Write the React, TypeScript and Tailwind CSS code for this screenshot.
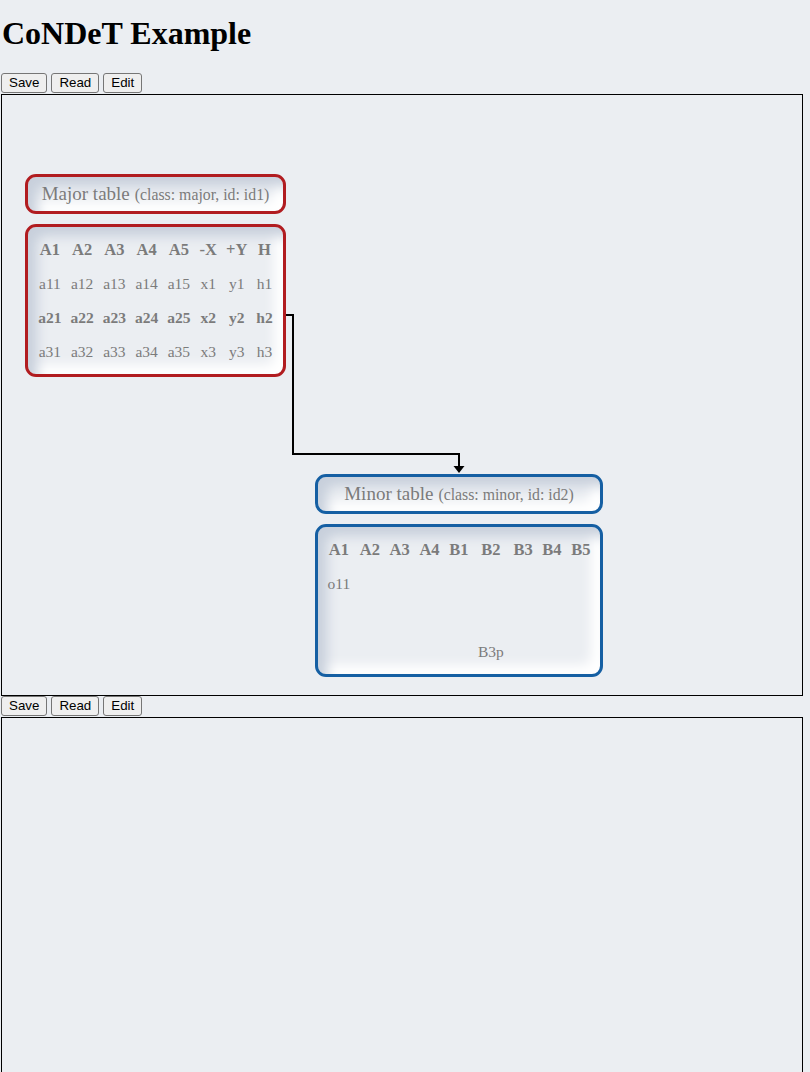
import React from "react";

const serif = "font-['Liberation_Serif','Times_New_Roman',serif]";
const inset =
  "bg-[#ebeef2] shadow-[inset_9px_9px_12px_#c8d0dc,inset_-9px_-9px_12px_#ffffff]";

type Node = {
  title: string;
  meta: string;
  color: string;
  pos: string;
  pad: string;
  headers: string[];
  rows: { cells: string[]; bold?: boolean }[];
};

const nodes: Node[] = [
  {
    title: "Major table",
    meta: "(class: major, id: id1)",
    color: "border-[#b11c20]",
    pos: "left-[23px] top-[79px] w-[261px]",
    pad: "px-[4.5px]",
    headers: ["A1", "A2", "A3", "A4", "A5", "-X", "+Y", "H"],
    rows: [
      { cells: ["a11", "a12", "a13", "a14", "a15", "x1", "y1", "h1"] },
      { cells: ["a21", "a22", "a23", "a24", "a25", "x2", "y2", "h2"], bold: true },
      { cells: ["a31", "a32", "a33", "a34", "a35", "x3", "y3", "h3"] },
    ],
  },
  {
    title: "Minor table",
    meta: "(class: minor, id: id2)",
    color: "border-[#155fa3]",
    pos: "left-[313px] top-[379px] w-[288px]",
    pad: "px-[4.8px]",
    headers: ["A1", "A2", "A3", "A4", "B1", "B2", "B3", "B4", "B5"],
    rows: [
      { cells: ["o11", "", "", "", "", "", "", "", ""] },
      { cells: ["", "", "", "", "", "", "", "", ""] },
      { cells: ["", "", "", "", "", "B3p", "", "", ""] },
    ],
  },
];

function Buttons() {
  return (
    <div className="flex gap-[4px] pl-px h-[21px] items-start">
      {["Save", "Read", "Edit"].map((b) => (
        <button
          key={b}
          className="h-[20px] px-[7px] border border-[#767676] rounded-[3px] bg-[#efefef] text-[13.33px] leading-none text-black font-['Liberation_Sans',Arial,sans-serif]"
        >
          {b}
        </button>
      ))}
    </div>
  );
}

function TableNode({ node }: { node: Node }) {
  return (
    <div className={`absolute ${node.pos} flex flex-col gap-[10px] ${serif} text-[#7b7b7b]`}>
      <div
        className={`h-[40px] border-[3px] ${node.color} rounded-[11px] ${inset} flex items-center justify-center gap-[5px]`}
      >
        <span className="text-[19px]">{node.title}</span>
        <span className="text-[15.8px] pt-[2px]">{node.meta}</span>
      </div>
      <div className={`h-[153px] border-[3px] ${node.color} rounded-[11px] ${inset} pt-[6px]`}>
        <table className="mx-auto border-collapse">
          <thead>
            <tr className="h-[34px]">
              {node.headers.map((h) => (
                <th key={h} className={`${node.pad} text-[16.5px] font-bold`}>
                  {h}
                </th>
              ))}
            </tr>
          </thead>
          <tbody>
            {node.rows.map((r, i) => (
              <tr key={i} className={`h-[34px] ${r.bold ? "font-bold" : ""}`}>
                {r.cells.map((c, j) => (
                  <td key={j} className={`${node.pad} text-[15.5px] text-center`}>
                    {c}
                  </td>
                ))}
              </tr>
            ))}
          </tbody>
        </table>
      </div>
    </div>
  );
}

function Canvas({ children }: { children?: React.ReactNode }) {
  return (
    <div className="relative ml-px w-[802px] h-[602px] border border-black">{children}</div>
  );
}

export default function App() {
  return (
    <div className="min-h-screen bg-[#ebeef2] overflow-hidden">
      <h1 className={`${serif} text-[32px] font-bold leading-[37px] pt-[15px] pb-[21px] pl-[2px] text-black`}>
        CoNDeT Example
      </h1>
      <Buttons />
      <Canvas>
        {nodes.map((n) => (
          <TableNode key={n.title} node={n} />
        ))}
        <svg className="absolute inset-0 pointer-events-none" width="800" height="600">
          <polyline
            points="284,220 291,220 291,359 457,359 457,372"
            fill="none"
            stroke="black"
            strokeWidth="2"
          />
          <polygon points="451.5,371 462.5,371 457,378" fill="black" />
        </svg>
      </Canvas>
      <Buttons />
      <Canvas />
    </div>
  );
}
